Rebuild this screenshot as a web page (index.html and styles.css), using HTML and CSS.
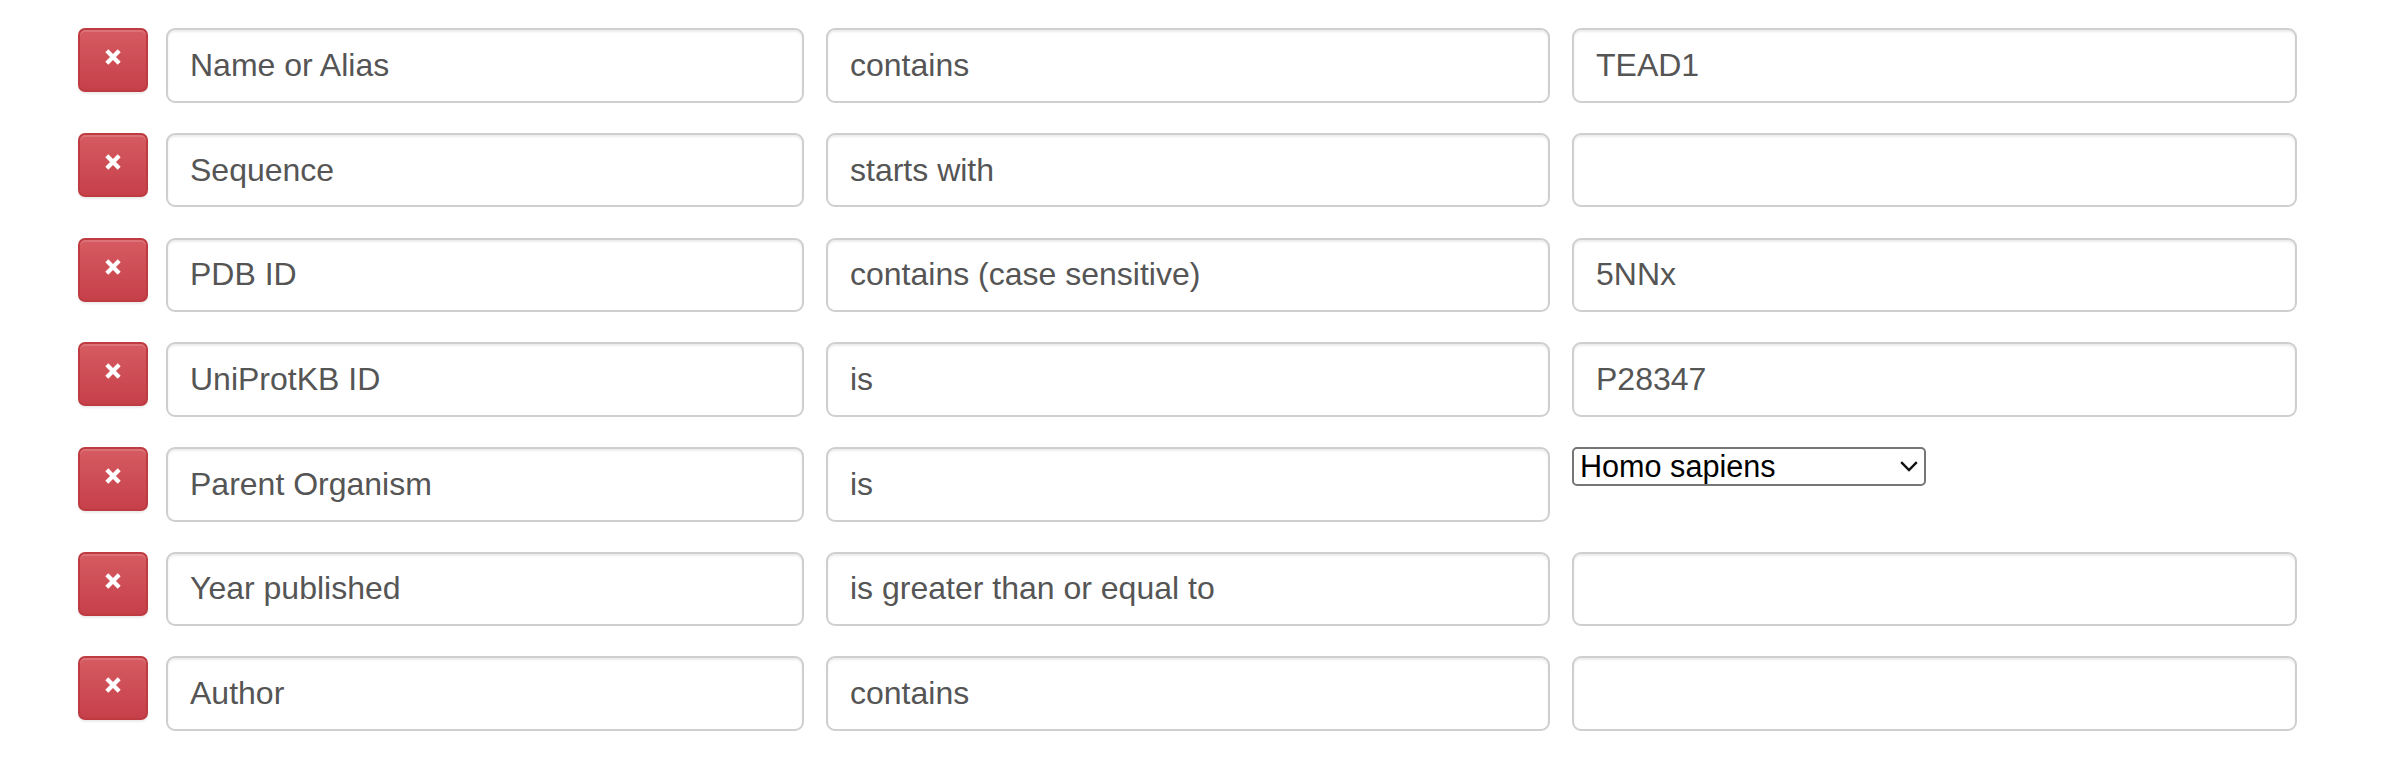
FILE: index.html
```html
<!DOCTYPE html>
<html lang="en">
<head>
<meta charset="utf-8">
<title>Search criteria</title>
<link rel="stylesheet" href="styles.css">
</head>
<body>
<div class="criteria">
  <div class="row">
    <button class="remove" type="button" aria-label="Remove"><svg class="x" viewBox="0 0 16 16" width="16" height="16"><path d="M1.8 1.8 L14.2 14.2 M14.2 1.8 L1.8 14.2" /></svg></button>
    <div class="field c1">Name or Alias</div>
    <div class="field c2">contains</div>
    <div class="field c3">TEAD1</div>
  </div>
  <div class="row">
    <button class="remove" type="button" aria-label="Remove"><svg class="x" viewBox="0 0 16 16" width="16" height="16"><path d="M1.8 1.8 L14.2 14.2 M14.2 1.8 L1.8 14.2" /></svg></button>
    <div class="field c1">Sequence</div>
    <div class="field c2">starts with</div>
    <div class="field c3"></div>
  </div>
  <div class="row">
    <button class="remove" type="button" aria-label="Remove"><svg class="x" viewBox="0 0 16 16" width="16" height="16"><path d="M1.8 1.8 L14.2 14.2 M14.2 1.8 L1.8 14.2" /></svg></button>
    <div class="field c1">PDB ID</div>
    <div class="field c2">contains (case sensitive)</div>
    <div class="field c3">5NNx</div>
  </div>
  <div class="row">
    <button class="remove" type="button" aria-label="Remove"><svg class="x" viewBox="0 0 16 16" width="16" height="16"><path d="M1.8 1.8 L14.2 14.2 M14.2 1.8 L1.8 14.2" /></svg></button>
    <div class="field c1">UniProtKB ID</div>
    <div class="field c2">is</div>
    <div class="field c3">P28347</div>
  </div>
  <div class="row">
    <button class="remove" type="button" aria-label="Remove"><svg class="x" viewBox="0 0 16 16" width="16" height="16"><path d="M1.8 1.8 L14.2 14.2 M14.2 1.8 L1.8 14.2" /></svg></button>
    <div class="field c1">Parent Organism</div>
    <div class="field c2">is</div>
    <div class="dropdown"><span>Homo sapiens</span><svg class="chev" viewBox="0 0 18 11" width="18" height="11"><polyline points="1.2,1.2 9,9 16.8,1.2" /></svg></div>
  </div>
  <div class="row">
    <button class="remove" type="button" aria-label="Remove"><svg class="x" viewBox="0 0 16 16" width="16" height="16"><path d="M1.8 1.8 L14.2 14.2 M14.2 1.8 L1.8 14.2" /></svg></button>
    <div class="field c1">Year published</div>
    <div class="field c2">is greater than or equal to</div>
    <div class="field c3"></div>
  </div>
  <div class="row">
    <button class="remove" type="button" aria-label="Remove"><svg class="x" viewBox="0 0 16 16" width="16" height="16"><path d="M1.8 1.8 L14.2 14.2 M14.2 1.8 L1.8 14.2" /></svg></button>
    <div class="field c1">Author</div>
    <div class="field c2">contains</div>
    <div class="field c3"></div>
  </div>
</div>
</body>
</html>
```

FILE: styles.css
```css
html, body {
  margin: 0;
  background: #ffffff;
}

body {
  font-family: "Liberation Sans", Arial, Helvetica, sans-serif;
}

.criteria {
  padding: 28.3px 0 0 78px;
}

.row {
  display: flex;
  align-items: flex-start;
  height: 74.5px;
  margin-bottom: 30.2px;
}

.remove {
  box-sizing: border-box;
  flex: 0 0 70px;
  width: 70px;
  height: 64px;
  margin: 0 18px 0 0;
  padding: 19px 0 0 0;
  border: 2px solid #bd3b41;
  border-radius: 7px;
  background: linear-gradient(to bottom, #d65b61 0%, #c6404a 100%);
  box-shadow: inset 0 2px 0 rgba(255, 255, 255, 0.15), 0 2px 2px rgba(0, 0, 0, 0.075);
  display: flex;
  justify-content: center;
  align-items: flex-start;
  cursor: pointer;
}

.x {
  display: block;
}

.x path {
  stroke: #ffffff;
  stroke-width: 4.2;
  fill: none;
}

.field {
  box-sizing: border-box;
  height: 74.5px;
  border: 2px solid #cfcfcf;
  border-radius: 9px;
  box-shadow: inset 0 2px 2px rgba(0, 0, 0, 0.075);
  background: #ffffff;
  padding: 0 22px;
  display: flex;
  align-items: center;
  font-size: 32px;
  color: #555555;
  white-space: nowrap;
}

.c1 {
  flex: 0 0 638px;
  width: 638px;
}

.c2 {
  flex: 0 0 724px;
  width: 724px;
  margin-left: 22px;
}

.c3 {
  flex: 0 0 725px;
  width: 725px;
  margin-left: 22px;
}

.dropdown {
  box-sizing: border-box;
  flex: 0 0 354px;
  width: 354px;
  height: 39px;
  margin-left: 22px;
  border: 2px solid #767676;
  border-radius: 5px;
  background: #ffffff;
  padding: 0 6px 0 6px;
  display: flex;
  align-items: center;
  justify-content: space-between;
  font-size: 30.6px;
  color: #000000;
}

.chev {
  display: block;
}

.chev polyline {
  stroke: #111111;
  stroke-width: 2.4;
  fill: none;
}
```
